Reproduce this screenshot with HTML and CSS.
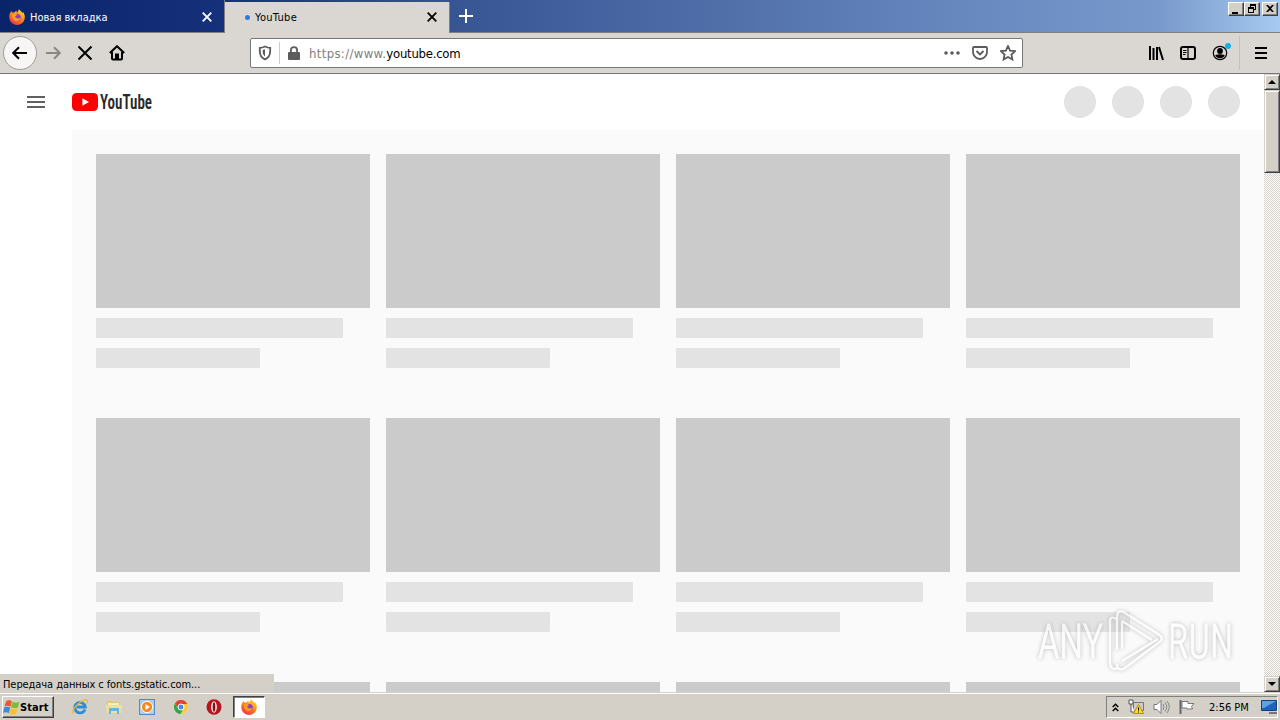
FILE: index.html
```html
<!DOCTYPE html>
<html lang="ru">

<head>
    <meta charset="UTF-8">
    <meta name="viewport" content="width=device-width, initial-scale=1.0">
    <title>YouTube</title>
    <link rel="stylesheet" href="styles.css">
</head>

<body>
    <svg width="0" height="0" class="defs">
        <defs>
            <linearGradient id="flame" x1="0.8" y1="0" x2="0.2" y2="1">
                <stop offset="0" stop-color="#ffe03a" />
                <stop offset="0.45" stop-color="#ff8a16" />
                <stop offset="1" stop-color="#f02a4c" />
            </linearGradient>
            <symbol id="firefox" viewBox="0 0 16 16">
                <path fill="url(#flame)" d="M1.2 3.8 2.6 2l.8 1.8 2.2-.5L7.3 1.6 8 4l2-3.8c1 1.3 2.6 2.2 3.5 3.8l.6-1c1.4 2 1.9 4 1.7 6A7.8 7.8 0 0 1 .3 9C.2 7 .5 5.2 1.2 3.8z" />
                <circle cx="8.2" cy="8.6" r="3.6" fill="#8b3bd0" />
                <path fill="#ff9b1e" d="M3 5.2c2-.8 3.6-.4 5.2.8L6 7.6c1 2.2 3.6 2.4 5.6.6-.4 3-3 4.6-5.4 3.8C3.800 11 2.600 8.200 3 5.200z" />
            </symbol>
        </defs>
    </svg>

    <div class="tabs">
        <div class="tab">
            <svg class="favicon" width="16" height="16"><use href="#firefox" /></svg>
            <span class="tab-title">Новая вкладка</span>
            <svg class="close" width="10" height="10" viewBox="0 0 10 10"><path d="M.7.7l8.600 8.600M9.300.7L.7 9.300" /></svg>
        </div>
        <div class="tab active">
            <span class="loading"></span>
            <span class="tab-title">YouTube</span>
            <svg class="close" width="10" height="10" viewBox="0 0 10 10"><path d="M.7.7l8.600 8.600M9.300.7L.7 9.300" /></svg>
        </div>
        <svg class="new-tab" width="14" height="14" viewBox="0 0 14 14"><path d="M7 0v14M0 7h14" /></svg>
        <div class="window-buttons">
            <span class="win-btn"><svg width="14" height="12" viewBox="0 0 14 12"><path d="M3 9h6v2H3z" /></svg></span>
            <span class="win-btn"><svg width="14" height="12" viewBox="0 0 14 12"><path fill-rule="evenodd" d="M5 1h6v6H9v3H3V4h2zM6 3v1h3v2h1V3zM4 6v3h4V6z" /></svg></span>
            <span class="win-btn win-close"><svg width="14" height="12" viewBox="0 0 14 12"><path d="M3 2h2l2 2 2-2h2L8 5.500 11 9H9L7 7 5 9H3l3-3.500z" /></svg></span>
        </div>
    </div>

    <div class="toolbar">
        <div class="nav">
            <span class="back"><svg width="16" height="16" viewBox="0 0 16 16"><path d="M15 8H1.500M7 2.200L1.200 8 7 13.800" /></svg></span>
            <svg class="forward" width="16" height="16" viewBox="0 0 16 16"><path d="M1 8h13.500M9 2.200L14.800 8 9 13.800" /></svg>
            <svg width="16" height="16" viewBox="0 0 16 16"><path d="M1.500 1.500l13 13M14.500 1.500l-13 13" /></svg>
            <svg width="16" height="16" viewBox="0 0 16 16"><path d="M.8 8L8 1.200 15.200 8M3 7v6.500q0 1 1 1h8q1 0 1-1V7" /><path class="solid" d="M6 8.500h4V14H6z" /></svg>
        </div>
        <div class="urlbar">
            <svg width="14" height="16" viewBox="0 0 14 16"><path d="M7 1.500c2 1 3.600 1.300 5.200 1.300V6c0 4.500-2 7-5.200 8.300C3.800 13 1.800 10.500 1.800 6V2.800C3.400 2.800 5 2.500 7 1.500z" /><path class="solid" d="M7 4.300L4.700 5v2c0 2 .8 3.300 2.300 4.500z" /></svg>
            <span class="divider"></span>
            <svg class="lock" width="12" height="15" viewBox="0 0 12 15"><rect class="solid" y="6" width="12" height="8" rx="1" /><path d="M2.900 7V4.200a3.100 3.100 0 0 1 6.200 0V7" /></svg>
            <span class="url"><span class="scheme">https://www.</span>youtube.com</span>
            <svg class="dots" width="16" height="4" viewBox="0 0 16 4"><circle cx="2" cy="2" r="1.800" /><circle cx="8" cy="2" r="1.800" /><circle cx="14" cy="2" r="1.800" /></svg>
            <svg width="16" height="16" viewBox="0 0 16 16"><path d="M2 2h12q1 0 1 1v4a7 7 0 0 1-14 0V3q0-1 1-1zM4.500 6L8 9.500 11.500 6" /></svg>
            <svg width="16" height="16" viewBox="0 0 16 16"><path d="M8 1l2.100 4.600 4.900.5-3.600 3.400 1 5L8 12l-4.400 2.500 1-5L1 6.100l4.900-.5z" /></svg>
        </div>
        <div class="tools">
            <svg width="16" height="16" viewBox="0 0 16 16"><path d="M2 1v14M5.500 3v12M9 2v13M11 2l4 13" /></svg>
            <svg width="16" height="16" viewBox="0 0 16 16"><rect x="1" y="2" width="14" height="12" rx="2" /><path class="thin" d="M8 2v12M3 5.500h3.500M3 7.500h3.500M3 9.500h2.500" /></svg>
            <span class="account">
                <svg width="16" height="16" viewBox="0 0 16 16"><circle class="thin" cx="8" cy="8" r="6.700" /><circle class="solid" cx="8" cy="6" r="2.900" /><path class="solid" d="M3.200 10q4.800-1.400 9.600 0-1.400 3.200-4.800 3.200T3.200 10z" /></svg>
                <span class="account-dot"></span>
            </span>
            <span class="tools-divider"></span>
            <svg width="12" height="12" viewBox="0 0 12 12"><path d="M0 1h12M0 6h12M0 11h12" /></svg>
        </div>
    </div>

    <div class="viewport">
        <div class="page">
            <header class="masthead">
                <svg class="guide" width="18" height="12" viewBox="0 0 18 12"><path d="M0 0h18v2H0zM0 5h18v2H0zM0 10h18v2H0z" /></svg>
                <svg class="logo" width="130" height="32" viewBox="0 0 130 32">
                    <rect y="7" width="26" height="18" rx="4.500" fill="#f00" />
                    <path d="M10.400 12.200v7.600L17 16z" fill="#fff" />
                    <text x="28" y="23" textLength="52" lengthAdjust="spacingAndGlyphs">YouTube</text>
                </svg>
                <div class="circles">
                    <span></span><span></span><span></span><span></span>
                </div>
            </header>
            <main class="grid">
                <div class="video"><div class="thumb"></div><div class="line"></div><div class="line short"></div></div>
                <div class="video"><div class="thumb"></div><div class="line"></div><div class="line short"></div></div>
                <div class="video"><div class="thumb"></div><div class="line"></div><div class="line short"></div></div>
                <div class="video"><div class="thumb"></div><div class="line"></div><div class="line short"></div></div>
                <div class="video"><div class="thumb"></div><div class="line"></div><div class="line short"></div></div>
                <div class="video"><div class="thumb"></div><div class="line"></div><div class="line short"></div></div>
                <div class="video"><div class="thumb"></div><div class="line"></div><div class="line short"></div></div>
                <div class="video"><div class="thumb"></div><div class="line"></div><div class="line short"></div></div>
                <div class="video"><div class="thumb"></div></div>
                <div class="video"><div class="thumb"></div></div>
                <div class="video"><div class="thumb"></div></div>
                <div class="video"><div class="thumb"></div></div>
            </main>
        </div>
        <div class="scrollbar">
            <span class="scroll-btn"><svg width="8" height="4" viewBox="0 0 8 4"><path d="M4 0l4 4H0z" /></svg></span>
            <span class="scroll-thumb"></span>
            <span class="scroll-btn down"><svg width="8" height="4" viewBox="0 0 8 4"><path d="M0 0h8L4 4z" /></svg></span>
        </div>
        <div class="status">Передача данных с fonts.gstatic.com...</div>
        <svg class="watermark" width="240" height="78" viewBox="0 0 240 78">
            <g class="mark">
                <text x="4" y="54" textLength="65" lengthAdjust="spacingAndGlyphs">ANY</text>
                <text x="134" y="54" textLength="65" lengthAdjust="spacingAndGlyphs">RUN</text>
                <path d="M82 15c-4-3-6-1-6 2v41c0 6 3 8 7 6M83 46V13c0-6 4-7 8-4l33 21c5 3 5 6 0 9L91 64c-5 3-8 1-8-4M88 17l30 19M88 17v28M88 57l36-22" />
            </g>
        </svg>
    </div>

    <div class="taskbar">
        <div class="start">
            <svg width="17" height="17" viewBox="0 0 16 16">
                <path fill="#e8582a" d="M3 2Q5.500 .3 8.300 2.100L7 7.400Q4 5.700 1.500 7z" />
                <path fill="#7dba36" d="M8.900 2.500Q12 4.200 15.500 2.500L14 8Q11 9.300 7.600 7.700z" />
                <path fill="#3c8ad8" d="M1.200 7.700Q4 6.600 6.800 8L5.500 13.400Q3 11.900 0 13.100z" />
                <path fill="#f6c12c" d="M7.400 8.400Q10.500 10 13.800 8.700L12.400 14Q9.500 15.300 6.100 13.800z" />
            </svg>
            <span>Start</span>
        </div>
        <div class="launch">
            <svg width="16" height="16" viewBox="0 0 16 16"><path d="M13 10.500A5.300 5.300 0 1 1 13.300 8H4.500" fill="none" stroke="#2a8ddb" stroke-width="2.800" /><path d="M1 14.500C-1 11 10-1 15 1.200q1 .6 0 3" fill="none" stroke="#e9b92c" stroke-width="1.300" /></svg>
            <svg width="16" height="16" viewBox="0 0 16 16"><path fill="#e9c765" d="M1 2h5l1 1h7v11H1z" /><path fill="#fbeeb0" d="M2 4h11v3H2z" /><path fill="#f7df8d" d="M0 6h16l-1 8H1z" /><path fill="#64b5e6" d="M3 9h10v6h-2v-3H5v3H3z" /></svg>
            <svg width="16" height="16" viewBox="0 0 16 16"><rect x=".5" y=".5" width="15" height="15" fill="#a9d0ef" stroke="#4a8dc8" /><circle cx="8" cy="8" r="5.600" fill="#f58a1f" stroke="#fff" /><path fill="#fff" d="M6.500 5v6L11 8z" /></svg>
            <svg width="16" height="16" viewBox="0 0 16 16"><circle cx="8" cy="8" r="7" fill="#fc3" /><path fill="#e34133" d="M1.900 4.500A7 7 0 0 1 14.200 5H8L5.400 9.600z" /><path fill="#30a552" d="M1.900 4.500L5.300 9.800 9.700 11 7.500 15A7 7 0 0 1 1.900 4.500z" /><circle cx="8" cy="8" r="3" fill="#4688ee" stroke="#fff" /></svg>
            <svg width="16" height="16" viewBox="0 0 16 16"><ellipse cx="8" cy="8" rx="7.500" ry="7.800" fill="#b3161b" /><ellipse cx="8" cy="8" rx="2.900" ry="5.800" fill="#eee" /><ellipse cx="8" cy="8" rx="1.300" ry="4.800" fill="#870f13" /></svg>
            <span class="running"><svg width="16" height="16"><use href="#firefox" /></svg></span>
        </div>
        <div class="tray">
            <svg width="7" height="9" viewBox="0 0 7 9"><path d="M.7 4L3.500 1.200 6.300 4M.7 8l2.800-2.800L6.300 8" fill="none" stroke="#000" stroke-width="1.500" /></svg>
            <svg width="16" height="16" viewBox="0 0 16 16"><path d="M5.500 3.500h10v8h-10z" fill="#ccc" stroke="#777" /><path d="M1 1h4v4H1zM3 5v8h4" fill="#fff" stroke="#555" /><path d="M10.500 5.500l5 9h-10z" fill="#fd2" stroke="#b89400" /><path d="M10 8.500h1v3h-1zM10 12.500h1v1h-1z" /></svg>
            <svg width="17" height="16" viewBox="0 0 17 16"><path d="M1 5.500h3l4-4v13l-4-4H1z" fill="#fff" stroke="#777" /><path d="M10 5q2 3 0 6M12 3.500q3.500 4.500 0 9M14 2q4.500 6 0 12" fill="none" stroke="#888" /></svg>
            <svg width="16" height="16" viewBox="0 0 16 16"><path d="M1.500 1v14" stroke="#666" stroke-width="2" /><path d="M3 2.500h6v2h6l-2.500 3 1 2.500H8V9H3z" fill="#fff" stroke="#777" /></svg>
            <span class="clock">2:56 PM</span>
            <svg class="desktop" width="16" height="14" viewBox="0 0 16 14"><path d="M.5.500h15v10H.5z" fill="#1d63bd" stroke="#163f7c" /><path d="M1 1h14L3 8H1z" fill="#5ba2e8" /><path d="M8 12h8v2H8z" fill="#777" /></svg>
        </div>
    </div>
</body>

</html>
```
FILE: styles.css
```css
* {
    box-sizing: border-box;
}

body {
    margin: 0;
    width: 1280px;
    height: 720px;
    overflow: hidden;
    display: flex;
    flex-direction: column;
    font-family: "DejaVu Sans Condensed", "DejaVu Sans", sans-serif;
    font-stretch: condensed;
    font-size: 11px;
    color: #000;
    background: #d4d0c8;
}

svg {
    flex: none;
    display: block;
}

.defs {
    position: absolute;
}

/* tabs */
.tabs {
    display: flex;
    height: 33px;
    flex: none;
    background: linear-gradient(to right, #0a246a, #16317b 225px, #385594 460px, #5271ab 740px, #6688bf 960px, #7899cb 1160px, #a6caf0);
    border-bottom: 1px solid #808080;
}

.tab {
    width: 225px;
    height: 32px;
    padding: 2px 12px 0 9px;
    display: flex;
    align-items: center;
    color: #fff;
    border-right: 1px solid #808080;
}

.tab.active {
    height: 33px;
    margin-top: 2px;
    padding: 0 12px 3px 20px;
    color: #000;
    background: #dad7d2;
}

.tab-title {
    margin-left: 5px;
    white-space: nowrap;
}

.active .tab-title {
    letter-spacing: 0.3px;
}

.close {
    margin-left: auto;
    fill: none;
    stroke: currentColor;
    stroke-width: 1.8;
}

.loading {
    width: 5px;
    height: 5px;
    border-radius: 50%;
    background: #2b7de0;
}

.new-tab {
    margin: 9px 0 0 9px;
    stroke: #fff;
    stroke-width: 2;
}

.window-buttons {
    display: flex;
    margin: 2px 2px 0 auto;
}

.win-btn {
    width: 16px;
    height: 14px;
    background: #d4d0c8;
    border: 1px solid;
    border-color: #fff #404040 #404040 #fff;
    box-shadow: inset -1px -1px #808080;
}

.win-close {
    margin-left: 2px;
}

/* toolbar */
.toolbar {
    display: flex;
    align-items: center;
    height: 41px;
    flex: none;
    background: #dad7d2;
    border-bottom: 1px solid #777;
}

.toolbar svg {
    fill: none;
    stroke: #000;
    stroke-width: 2;
}

.toolbar svg .solid {
    fill: #000;
    stroke: none;
}

.toolbar svg .thin {
    stroke-width: 1.2;
}

.nav {
    display: flex;
    align-items: center;
    gap: 16px;
    width: 250px;
    padding-left: 3px;
}

.back {
    width: 34px;
    height: 34px;
    margin-right: -8px;
    display: flex;
    align-items: center;
    justify-content: center;
    background: #f7f6f5;
    border: 1px solid #a09e9a;
    border-radius: 50%;
}

.toolbar .forward {
    stroke: #898783;
}

.urlbar {
    display: flex;
    align-items: center;
    width: 773px;
    height: 30px;
    padding: 0 6px 0 7px;
    background: #fff;
    border: 1px solid #777;
    border-radius: 2px;
}

.toolbar .urlbar svg {
    stroke: #5c5c5c;
    stroke-width: 1.8;
}

.toolbar .urlbar .solid,
.toolbar .urlbar .dots {
    fill: #5c5c5c;
    stroke: none;
}

.divider {
    width: 1px;
    height: 22px;
    margin: 0 8px 0 7px;
    background: #ccc;
}

.url {
    margin: 0 auto 0 9px;
    padding-top: 1px;
    font-size: 13px;
}

.scheme {
    color: #808080;
    letter-spacing: 0.35px;
}

.url {
    letter-spacing: -0.25px;
}

.urlbar .dots {
    margin-right: 12px;
}

.urlbar .dots + svg {
    margin-right: 12px;
}

.tools {
    display: flex;
    align-items: center;
    margin-left: auto;
    padding-right: 13px;
    gap: 16px;
}

.account {
    position: relative;
}

.account-dot {
    position: absolute;
    top: -2px;
    right: -3px;
    width: 6px;
    height: 6px;
    border-radius: 50%;
    background: #12b0e4;
}

.tools-divider {
    width: 1px;
    height: 34px;
    margin: 0 -1px 0 -5px;
    background: #c4c1bc;
}

/* page */
.viewport {
    position: relative;
    display: flex;
    height: 618px;
    flex: none;
}

.page {
    width: 1264px;
    overflow: hidden;
    background: #fff;
}

.masthead {
    display: flex;
    align-items: center;
    height: 56px;
    padding: 0 24px 0 27px;
}

.guide {
    fill: #606060;
}

.logo {
    margin-left: 27px;
}

.logo text {
    font-family: Roboto, sans-serif;
    font-size: 21px;
    font-weight: 600;
    fill: #282828;
}

.circles {
    display: flex;
    gap: 16px;
    margin-left: auto;
}

.circles span {
    width: 32px;
    height: 32px;
    border-radius: 50%;
    background: #e3e3e3;
}

.grid {
    display: grid;
    grid-template-columns: repeat(4, 274px);
    gap: 50px 16px;
    margin-left: 72px;
    padding: 24px;
    background: #fafafa;
}

.thumb {
    height: 154px;
    background: #cbcbcb;
}

.line {
    width: 247px;
    height: 20px;
    margin-top: 10px;
    border-radius: 1px;
    background: #e3e3e3;
}

.line.short {
    width: 164px;
}

.scrollbar {
    display: flex;
    flex-direction: column;
    width: 16px;
    background: repeating-conic-gradient(#fff 0 25%, #d4d0c8 0 50%) 0 0 / 2px 2px;
}

.scroll-btn,
.scroll-thumb {
    display: flex;
    align-items: center;
    justify-content: center;
    height: 16px;
    background: #d4d0c8;
    border: 1px solid;
    border-color: #d4d0c8 #404040 #404040 #d4d0c8;
    box-shadow: inset 1px 1px #fff, inset -1px -1px #808080;
}

.scroll-thumb {
    height: 83px;
}

.down {
    margin-top: auto;
}

.status {
    position: absolute;
    left: 0;
    bottom: 0;
    width: 274px;
    height: 18px;
    padding-left: 3px;
    line-height: 21px;
    letter-spacing: -0.08px;
    background: #d4d0c8;
    white-space: nowrap;
}

.watermark {
    position: absolute;
    left: 1034px;
    top: 530px;
}

.mark {
    fill: none;
    stroke: #fff;
    stroke-width: 2.2;
    opacity: 0.65;
    filter: drop-shadow(0 0 2px #999);
}

.mark text {
    font-family: Roboto, sans-serif;
    font-size: 48px;
    font-weight: 300;
    fill: #fff;
    stroke-width: 1;
}

/* taskbar */
.taskbar {
    display: flex;
    align-items: center;
    height: 28px;
    flex: none;
    padding: 1px 2px 0;
    border-top: 1px solid #d4d0c8;
    box-shadow: inset 0 1px #fff;
}

.start {
    display: flex;
    align-items: center;
    width: 52px;
    height: 22px;
    font-weight: bold;
    letter-spacing: 0.1px;
    border: 1px solid;
    border-color: #fff #404040 #404040 #fff;
    box-shadow: inset -1px -1px #808080;
}

.launch {
    display: flex;
    align-items: center;
    gap: 17.5px;
    margin-left: 18px;
}

.running {
    display: flex;
    align-items: center;
    justify-content: center;
    width: 32px;
    height: 22px;
    margin-left: -7px;
    background: #fff;
    border: 1px solid;
    border-color: #404040 #fff #fff #404040;
    box-shadow: inset 1px 1px #808080;
}

.tray {
    display: flex;
    align-items: center;
    gap: 8px;
    width: 172px;
    height: 22px;
    margin-left: auto;
    padding-left: 5px;
    border: 1px solid;
    border-color: #808080 #fff #fff #808080;
}

.tray svg + svg {
    margin-left: 1px;
}

.clock {
    margin-left: 6px;
    white-space: nowrap;
}

.desktop {
    margin-left: auto;
}
```
